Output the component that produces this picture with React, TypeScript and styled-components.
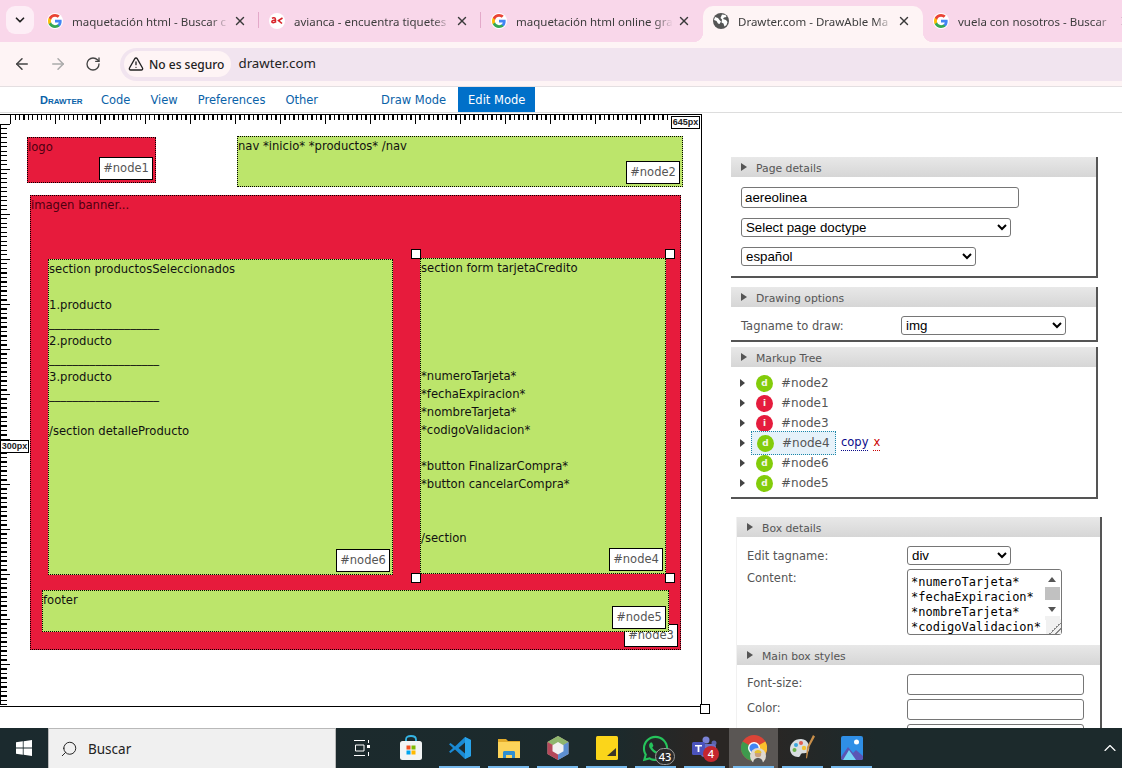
import React from "react";
import styled, { createGlobalStyle, css } from "styled-components";
import { ArrowLeft, ArrowRight, ChevronDown, ChevronUp, RotateCw, Search, TriangleAlert, X } from "lucide-react";
import { FaWhatsapp } from "react-icons/fa";

const GoogleIcon = () => (
    <svg width="16" height="16" viewBox="0 0 48 48">
        <circle cx="24" cy="24" r="24" fill="#fff" />
        <path fill="#4285f4" d="M44 24.5c0-1.500-.1-2.900-.4-4.300H24v8.200h11.300c-.5 2.600-2 4.900-4.300 6.400v5.300h6.900C41.900 36.900 44 31.200 44 24.500z" />
        <path fill="#34a853" d="M24 45c5.700 0 10.500-1.900 13.900-5.100L31 34.600c-1.900 1.300-4.300 2-7 2-5.400 0-10-3.600-11.600-8.500H5.300v5.400C8.800 40.300 15.900 45 24 45z" />
        <path fill="#fbbc05" d="M12.400 28.100c-.4-1.300-.7-2.600-.7-4.100s.3-2.800.7-4.100v-5.400H5.300C3.900 17.300 3 20.600 3 24s.9 6.700 2.300 9.500l7.100-5.400z" />
        <path fill="#ea4335" d="M24 11.400c3.100 0 5.800 1.100 8 3.100l6-6C34.500 5.200 29.700 3 24 3 15.900 3 8.800 7.700 5.300 14.500l7.100 5.400c1.600-4.900 6.200-8.500 11.600-8.500z" />
    </svg>
);

const AviancaIcon = () => (
    <svg width="16" height="16" viewBox="0 0 16 16">
        <circle cx="8" cy="8" r="8" fill="#fff" />
        <path d="M3 5.300c1-.7 3.500-.9 3.500 1.100v3.300M6.500 7.400c-1.500-.3-3.700 0-3.700 1.300 0 1.400 2.500 1.200 3.700-.2" stroke="#d8232a" strokeWidth="1.500" fill="none" />
        <path d="M13.500 5L9.500 7.500l3.500 3" stroke="#d8232a" strokeWidth="1.600" fill="none" />
    </svg>
);

const GlobeIcon = () => (
    <svg width="16" height="16" viewBox="0 0 16 16">
        <circle cx="8" cy="8" r="8" fill="#555" />
        <path d="M2 4l3 1 1.500 2L8 8.500 6.500 11 5 10.500 3.500 8 1 7zM9 1.500l3.500.5 1 2-2.500.5L10 6l3 1 1.500 2-1 3-2 1.500-1-3-2-1 .5-3L7.500 5z" fill="#fff" />
    </svg>
);

const WindowsIcon = () => (
    <svg width="16" height="16" viewBox="0 0 16 16" fill="#fff">
        <path d="M0 2.300l6.800-1v6.300H0zM7.600 1.200L16 0v7.600H7.600zM0 8.400h6.800v6.300l-6.800-1zM7.600 8.400H16V16l-8.400-1.200z" />
    </svg>
);

const TaskViewIcon = () => (
    <svg width="18" height="18" viewBox="0 0 18 18" fill="none" stroke="#fff" strokeWidth="1">
        <path d="M1 1.500h11M1 16.500h11M2.500 6h8.500v6H2.500zM15.500 1v3M15.500 13v4" />
        <rect x="14" y="6" width="3" height="3" fill="#fff" stroke="none" />
    </svg>
);

const StoreIcon = () => (
    <svg width="24" height="26" viewBox="0 0 24 26">
        <path d="M7 7V4.500C7 2 9 1 12 1s5 1 5 3.500V7" fill="none" stroke="#35b5e5" strokeWidth="1.800" />
        <rect x="1" y="6" width="22" height="19" rx="2.500" fill="#f2f4f5" />
        <rect x="7.500" y="10.500" width="4" height="4" fill="#f25022" />
        <rect x="12.500" y="10.500" width="4" height="4" fill="#7fba00" />
        <rect x="7.500" y="15.500" width="4" height="4" fill="#00a4ef" />
        <rect x="12.500" y="15.500" width="4" height="4" fill="#ffb900" />
    </svg>
);

const VsCodeIcon = () => (
    <svg width="24" height="24" viewBox="0 0 24 24">
        <path d="M17 1l6 3v16l-6 3-10-9.500L2.500 17 1 15.800 5 12 1 8.200l1.500-1.200L7 10.500z" fill="#1a8ad4" />
        <path d="M17 6.500L10.500 12l6.500 5.500z" fill="#1c2a2e" />
        <path d="M17 1l6 3v16l-6 3z" fill="#28a3ea" />
    </svg>
);

const FolderIcon = () => (
    <svg width="24" height="22" viewBox="0 0 24 22">
        <path d="M1 2h8l2 2h12v16H1z" fill="#e3ac2a" />
        <rect x="1" y="5" width="22" height="16" fill="#fcd45a" />
        <path d="M6 21v-5.500c0-1 .8-1.500 1.500-1.500h9c.8 0 1.500.5 1.500 1.500V21h-3v-3H9v3z" fill="#2f8fd0" />
    </svg>
);

const CubeIcon = () => (
    <svg width="24" height="26" viewBox="0 0 24 26">
        <path d="M12 1l10.500 6v12L12 25 1.500 19V7z" fill="#c8a7a0" />
        <path d="M12 1l10.500 6L12 13 1.500 7z" fill="#8fb66d" />
        <path d="M1.500 7L12 13v12L1.500 19z" fill="#b5485a" />
        <path d="M22.500 7v12L12 25V13z" fill="#5d8fd0" />
        <path d="M12 7l5.500 3.200v6L12 19.500l-5.500-3.300v-6z" fill="#f1f1f1" />
    </svg>
);

const StickyIcon = () => (
    <svg width="22" height="24" viewBox="0 0 22 24">
        <rect width="22" height="24" rx="1.500" fill="#fbd51a" />
        <path d="M11 20l9-8v8z" fill="#3a3527" />
    </svg>
);

const TeamsIcon = () => (
    <svg width="26" height="24" viewBox="0 0 26 24">
        <circle cx="14" cy="4" r="3.500" fill="#7b83d6" />
        <circle cx="22" cy="7" r="2.500" fill="#5b63ac" />
        <rect x="9" y="8" width="15" height="13" rx="3" fill="#6a71c4" />
        <rect x="0" y="6" width="13" height="13" rx="1.500" fill="#4b53bc" />
        <path d="M3 9h7v1.600H7.400V16H5.600v-5.400H3z" fill="#fff" />
    </svg>
);

const ChromeIcon = () => (
    <svg width="26" height="26" viewBox="0 0 26 26">
        <circle cx="13" cy="13" r="13" fill="#db4437" />
        <path d="M13 13L24.300 6.500A13 13 0 0 1 13 26z" fill="#fbc02d" />
        <path d="M13 13L13 26A13 13 0 0 1 1.700 6.500z" fill="#3e9a4d" />
        <circle cx="13" cy="13" r="6" fill="#fff" />
        <circle cx="13" cy="13" r="4.600" fill="#4285f4" />
    </svg>
);

const AvatarIcon = () => (
    <svg width="16" height="16" viewBox="0 0 16 16">
        <circle cx="8" cy="8" r="8" fill="#ded8d0" />
        <circle cx="8" cy="6" r="3.200" fill="#caa07e" />
        <path d="M4.500 5c0-2 1.500-3 3.500-3s3.500 1 3.500 3z" fill="#e7c22e" />
        <path d="M3 16c0-4 2-6 5-6s5 2 5 6z" fill="#555" />
    </svg>
);

const PaletteIcon = () => (
    <svg width="28" height="28" viewBox="0 0 28 28">
        <path d="M12 5C5 5 1 10 1 15c0 5 4 8 8 8 2.500 0 2-2 3-3 1.500-1.500 5 0 7-2 3-3 1-13-7-13z" fill="#d8dde0" />
        <circle cx="7" cy="11" r="2" fill="#3aa5dc" />
        <circle cx="12" cy="9" r="2" fill="#e35d4f" />
        <circle cx="5.500" cy="16" r="2" fill="#6bb24a" />
        <circle cx="15" cy="14" r="2.200" fill="#f1c232" />
        <path d="M24 1l2 1.500-6 11-2 11-1-.5 1-11z" fill="#c98f4a" />
    </svg>
);

const PhotosIcon = () => (
    <svg width="22" height="24" viewBox="0 0 22 24">
        <rect width="22" height="24" rx="2" fill="#2f8fe6" />
        <path d="M0 21l7-10 5 6 3-3 7 6v2a2 2 0 0 1-2 2H2a2 2 0 0 1-2-2z" fill="#5b55b5" />
        <path d="M2 24l6-10 7 10z" fill="#76d4f5" />
        <circle cx="15.500" cy="6" r="2.500" fill="#fff" />
    </svg>
);

const tabs = [
    { icon: <GoogleIcon />, title: "maquetación html - Buscar c" },
    { icon: <AviancaIcon />, title: "avianca - encuentra tiquetes" },
    { icon: <GoogleIcon />, title: "maquetación html online gra" },
    { icon: <GlobeIcon />, title: "Drawter.com - DrawAble Ma", active: true },
    { icon: <GoogleIcon />, title: "vuela con nosotros - Buscar" },
];

const rule = "_".repeat(19);

const productsText = [
    "section productosSeleccionados",
    "",
    "1.producto",
    rule,
    "2.producto",
    rule,
    "3.producto",
    rule,
    "",
    "/section detalleProducto",
].join("\n");

const formText = [
    "section form tarjetaCredito",
    "",
    "",
    "",
    "",
    "",
    "*numeroTarjeta*",
    "*fechaExpiracion*",
    "*nombreTarjeta*",
    "*codigoValidacion*",
    "",
    "*button FinalizarCompra*",
    "*button cancelarCompra*",
    "",
    "",
    "/section",
].join("\n");

const contentValue = "*numeroTarjeta*\n*fechaExpiracion*\n*nombreTarjeta*\n*codigoValidacion*\n\n*button FinalizarCompra*\n*button cancelarCompra*\n\n\n/section";

const treeRows = [
    { kind: "d", name: "#node2" },
    { kind: "i", name: "#node1" },
    { kind: "i", name: "#node3" },
    { kind: "d", name: "#node4", selected: true },
    { kind: "d", name: "#node6" },
    { kind: "d", name: "#node5" },
];

const handles = [
    { x: 411, y: 136 },
    { x: 665, y: 136 },
    { x: 411, y: 460 },
    { x: 665, y: 460 },
];

export default function App() {
    return (
        <>
            <GlobalStyle />
            <Page>
                <TabStrip>
                    <TabMenu>
                        <ChevronDown size={14} strokeWidth={3} />
                    </TabMenu>
                    {tabs.map((tab, index) => (
                        <Tab key={tab.title} $active={!!tab.active} $divider={index < 2}>
                            <FavIcon>{tab.icon}</FavIcon>
                            <TabTitle>{tab.title}</TabTitle>
                            <X size={14} strokeWidth={2.4} color="#3a3a3a" />
                        </Tab>
                    ))}
                </TabStrip>

                <Toolbar>
                    <ArrowLeft size={18} color="#444" />
                    <ArrowRight size={18} color="#aaa" />
                    <RotateCw size={16} color="#444" />
                    <Omnibox>
                        <SecurityChip>
                            <TriangleAlert size={16} color="#222" />
                            No es seguro
                        </SecurityChip>
                        <Address>drawter.com</Address>
                    </Omnibox>
                </Toolbar>

                <NavBar>
                    <Logo>Drawter</Logo>
                    <NavItem>Code</NavItem>
                    <NavItem>View</NavItem>
                    <NavItem>Preferences</NavItem>
                    <NavItem>Other</NavItem>
                    <ModeItem>Draw Mode</ModeItem>
                    <ModeItem $active>Edit Mode</ModeItem>
                </NavBar>

                <Workspace>
                    <Canvas>
                        <TopRuler />
                        <LeftRuler />
                        <SizeTag $x={671} $y={3}>645px</SizeTag>
                        <SizeTag $x={0} $y={327}>300px</SizeTag>
                        <CornerHandle />

                        <Node $x={27} $y={24} $w={129} $h={46} $red>
                            logo
                            <NodeLabel>#node1</NodeLabel>
                        </Node>
                        <Node $x={237} $y={23} $w={446} $h={51}>
                            nav *inicio* *productos* /nav
                            <NodeLabel>#node2</NodeLabel>
                        </Node>
                        <Node $x={30} $y={82} $w={651} $h={455} $red>
                            imagen banner...
                            <NodeLabel>#node3</NodeLabel>
                        </Node>
                        <Node $x={48} $y={146} $w={345} $h={316}>
                            {productsText}
                            <NodeLabel>#node6</NodeLabel>
                        </Node>
                        <Node $x={420} $y={145} $w={246} $h={316}>
                            {formText}
                            <NodeLabel>#node4</NodeLabel>
                        </Node>
                        <Node $x={42} $y={477} $w={627} $h={42}>
                            footer
                            <NodeLabel>#node5</NodeLabel>
                        </Node>
                        {handles.map(handle => (
                            <Handle key={`${handle.x}-${handle.y}`} $x={handle.x} $y={handle.y} />
                        ))}
                    </Canvas>

                    <Sidebar>
                        <Panel>
                            <PanelHeader>Page details</PanelHeader>
                            <PageFields>
                                <NameInput defaultValue="aereolinea" />
                                <NativeSelect $width={270}>
                                    <option>Select page doctype</option>
                                </NativeSelect>
                                <NativeSelect $width={235}>
                                    <option>español</option>
                                </NativeSelect>
                            </PageFields>
                        </Panel>

                        <Panel $gap={9}>
                            <PanelHeader>Drawing options</PanelHeader>
                            <FieldRow>
                                <FieldLabel>Tagname to draw:</FieldLabel>
                                <NativeSelect $width={165}>
                                    <option>img</option>
                                </NativeSelect>
                            </FieldRow>
                        </Panel>

                        <Panel $gap={5}>
                            <PanelHeader>Markup Tree</PanelHeader>
                            <Tree>
                                {treeRows.map(row => (
                                    <TreeRow key={row.name}>
                                        <Caret />
                                        <TreeEntry $selected={!!row.selected}>
                                            <KindBadge $kind={row.kind}>{row.kind}</KindBadge>
                                            {row.name}
                                        </TreeEntry>
                                        {row.selected && (
                                            <>
                                                <CopyLink>copy</CopyLink>
                                                <RemoveLink>x</RemoveLink>
                                            </>
                                        )}
                                    </TreeRow>
                                ))}
                            </Tree>
                        </Panel>

                        <OpenPanel>
                            <PanelHeader>Box details</PanelHeader>
                            <BoxFields>
                                <FieldRow $compact>
                                    <FieldLabel>Edit tagname:</FieldLabel>
                                    <NativeSelect $width={104}>
                                        <option>div</option>
                                    </NativeSelect>
                                </FieldRow>
                                <ContentRow>
                                    <ContentLabel>Content:</ContentLabel>
                                    <ContentBox>
                                        <ContentArea defaultValue={contentValue} />
                                        <ScrollTrack>
                                            <ScrollThumb />
                                        </ScrollTrack>
                                    </ContentBox>
                                </ContentRow>
                            </BoxFields>
                            <PanelHeader>Main box styles</PanelHeader>
                            <StyleFields>
                                <FieldRow $compact>
                                    <StyleLabel>Font-size:</StyleLabel>
                                    <StyleInput />
                                </FieldRow>
                                <FieldRow $compact>
                                    <StyleLabel>Color:</StyleLabel>
                                    <StyleInput />
                                </FieldRow>
                                <FieldRow $compact>
                                    <StyleLabel />
                                    <StyleInput />
                                </FieldRow>
                            </StyleFields>
                        </OpenPanel>
                    </Sidebar>
                </Workspace>

                <Taskbar>
                    <StartButton>
                        <WindowsIcon />
                    </StartButton>
                    <SearchBox>
                        <FlippedSearch size={18} strokeWidth={1.3} color="#222" />
                        Buscar
                    </SearchBox>
                    <TaskIcons>
                        <TaskIcon><TaskViewIcon /></TaskIcon>
                        <TaskIcon><StoreIcon /></TaskIcon>
                        <TaskIcon $running><VsCodeIcon /></TaskIcon>
                        <TaskIcon $running><FolderIcon /></TaskIcon>
                        <TaskIcon $running><CubeIcon /></TaskIcon>
                        <TaskIcon $running><StickyIcon /></TaskIcon>
                        <TaskIcon $running>
                            <FaWhatsapp size={29} color="#25c35b" />
                            <CountBadge $dark>43</CountBadge>
                        </TaskIcon>
                        <TaskIcon $running>
                            <TeamsIcon />
                            <CountBadge>4</CountBadge>
                        </TaskIcon>
                        <TaskIcon $running $current>
                            <ChromeIcon />
                            <AvatarSlot><AvatarIcon /></AvatarSlot>
                        </TaskIcon>
                        <TaskIcon $running><PaletteIcon /></TaskIcon>
                        <TaskIcon $running><PhotosIcon /></TaskIcon>
                    </TaskIcons>
                    <TrayChevron>
                        <ChevronUp size={20} strokeWidth={1.4} color="#fff" />
                    </TrayChevron>
                </Taskbar>
            </Page>
        </>
    );
}

const GlobalStyle = createGlobalStyle`
    html, body {
        margin: 0;
        padding: 0;
        background: #fff;
    }
    body {
        font-family: "DejaVu Sans", sans-serif;
    }
    * {
        box-sizing: border-box;
    }
`;

const Page = styled.div`
    width: 1122px;
    height: 768px;
    display: flex;
    flex-direction: column;
    overflow: hidden;
`;

const TabStrip = styled.div`
    height: 42px;
    flex: none;
    display: flex;
    align-items: flex-end;
    padding-left: 37px;
    position: relative;
    background: #f9d7ea;
    overflow: hidden;
`;

const TabMenu = styled.div`
    position: absolute;
    left: 6px;
    top: 6px;
    width: 28px;
    height: 28px;
    border-radius: 9px;
    display: flex;
    align-items: center;
    justify-content: center;
    background: #fdeef6;
    color: #222;
`;

const activeTab = css`
    &::before,
    &::after {
        content: "";
        position: absolute;
        bottom: 0;
        width: 10px;
        height: 10px;
    }
    &::before {
        left: -10px;
        background: radial-gradient(circle at 0 0, transparent 10px, #fef4f5 10.5px);
    }
    &::after {
        right: -10px;
        background: radial-gradient(circle at 100% 0, transparent 10px, #fef4f5 10.5px);
    }
`;

const dividedTab = css`
    &::after {
        content: "";
        position: absolute;
        right: 0;
        top: 6px;
        height: 16px;
        width: 1px;
        background: #e3a9c9;
    }
`;

const Tab = styled.div<{ $active: boolean; $divider: boolean }>`
    width: ${p => (p.$active ? "220px" : "222px")};
    height: 36px;
    flex: none;
    display: flex;
    align-items: center;
    padding: 0 12px 6px 10px;
    position: relative;
    border-radius: 10px 10px 0 0;
    background: ${p => (p.$active ? "#fef4f5" : "transparent")};
    ${p => p.$active && activeTab}
    ${p => p.$divider && dividedTab}
`;

const FavIcon = styled.span`
    width: 16px;
    height: 16px;
    flex: none;
    display: flex;
    margin-right: 9px;
`;

const TabTitle = styled.span`
    flex: 1;
    min-width: 0;
    margin-right: 4px;
    font: 11.5px "Noto Sans", sans-serif;
    color: #3c3c3c;
    white-space: nowrap;
    mask-image: linear-gradient(to right, #000 88%, transparent 100%);
`;

const Toolbar = styled.div`
    height: 45px;
    flex: none;
    display: flex;
    align-items: center;
    gap: 18px;
    padding-left: 13px;
    background: #fef4f5;
    border-bottom: 1px solid #e4dfe1;
`;

const Omnibox = styled.div`
    flex: 1;
    height: 33px;
    margin-left: 1px;
    margin-right: -20px;
    display: flex;
    align-items: center;
    padding-left: 4px;
    border-radius: 17px;
    background: #f1e4ef;
`;

const SecurityChip = styled.div`
    height: 26px;
    display: flex;
    align-items: center;
    gap: 5px;
    padding: 0 7px 0 4px;
    border-radius: 13px;
    background: #fef4f5;
    font: 500 12px "Noto Sans", sans-serif;
    color: #222;
`;

const Address = styled.span`
    margin-left: 7px;
    margin-top: -2px;
    font: 13.3px "Noto Sans", sans-serif;
    color: #222;
`;

const NavBar = styled.div`
    height: 26px;
    flex: none;
    display: flex;
    align-items: stretch;
    padding-left: 30px;
    border-bottom: 1px solid #ddd;
    font-size: 11.5px;
    color: #0a62a8;
`;

const Logo = styled.div`
    width: 61px;
    padding-left: 10px;
    display: flex;
    align-items: center;
    font: 700 11px "Liberation Sans", sans-serif;
    font-variant: small-caps;
    color: #0a62a8;
`;

const NavItem = styled.div`
    display: flex;
    align-items: center;
    padding: 0 10px;
`;

const ModeItem = styled(NavItem)<{ $active?: boolean }>`
    background: ${p => (p.$active ? "#0070c9" : "transparent")};
    color: ${p => (p.$active ? "#fff" : "#0a62a8")};
    margin-left: ${p => (p.$active ? "2px" : "43px")};
`;

const Workspace = styled.div`
    flex: 1;
    min-height: 0;
    display: flex;
    overflow: hidden;
`;

const Canvas = styled.div`
    width: 731px;
    flex: none;
    position: relative;
    &::before {
        content: "";
        position: absolute;
        left: 0;
        top: 1px;
        width: 701px;
        height: 591px;
        border: solid #000;
        border-width: 1px 1px 1px 0;
    }
`;

const TopRuler = styled.div`
    position: absolute;
    left: 10px;
    top: 1px;
    width: 658px;
    height: 10px;
    background:
        repeating-linear-gradient(to right, #000 0 1px, transparent 1px 45px) 0 0 / 100% 10px no-repeat,
        repeating-linear-gradient(to right, #000 0 1px, transparent 1px 4.5px) 0 0 / 100% 6px no-repeat;
`;

const LeftRuler = styled.div`
    position: absolute;
    left: 0;
    top: 11px;
    width: 10px;
    height: 581px;
    border-left: 1px solid #000;
    background:
        repeating-linear-gradient(to bottom, #000 0 1px, transparent 1px 45px) 0 0 / 10px 100% no-repeat,
        repeating-linear-gradient(to bottom, #000 0 1px, transparent 1px 4.5px) 0 0 / 6px 100% no-repeat;
`;

const SizeTag = styled.div<{ $x: number; $y: number }>`
    position: absolute;
    left: ${p => p.$x}px;
    top: ${p => p.$y}px;
    width: 29px;
    height: 13px;
    border: 1px solid #000;
    background: #fff;
    font: 700 9px/11px "Liberation Sans", sans-serif;
    text-align: center;
    color: #222;
    z-index: 3;
`;

const CornerHandle = styled.div`
    position: absolute;
    left: 700px;
    top: 591px;
    width: 10px;
    height: 10px;
    border: 1px solid #000;
    background: #fff;
`;

const Node = styled.div<{ $x: number; $y: number; $w: number; $h: number; $red?: boolean }>`
    position: absolute;
    left: ${p => p.$x}px;
    top: ${p => p.$y}px;
    width: ${p => p.$w}px;
    height: ${p => p.$h}px;
    border: 1px dotted #000;
    background: ${p => (p.$red ? "#e71b3c" : "#bce56b")};
    color: ${p => (p.$red ? "#4d0010" : "#111")};
    font-size: 11.6px;
    line-height: 18px;
    white-space: pre-wrap;
`;

const NodeLabel = styled.div`
    position: absolute;
    right: 2px;
    bottom: 2px;
    width: 54px;
    height: 23px;
    border: 1px solid #000;
    background: #fff;
    font-size: 11.5px;
    line-height: 21px;
    text-align: center;
    color: #555;
`;

const Handle = styled.div<{ $x: number; $y: number }>`
    position: absolute;
    left: ${p => p.$x}px;
    top: ${p => p.$y}px;
    width: 10px;
    height: 10px;
    border: 1px solid #000;
    background: #fff;
`;

const Sidebar = styled.div`
    flex: 1;
    min-width: 0;
    display: flex;
    flex-direction: column;
    padding-top: 44px;
`;

const Panel = styled.section<{ $gap?: number }>`
    width: 367px;
    margin-top: ${p => p.$gap ?? 0}px;
    background: #fff;
    border-right: 2px solid #555;
    border-bottom: 2px solid #555;
`;

const OpenPanel = styled.section`
    width: 366px;
    margin: 18px 0 0 5px;
    background: #fff;
    border-right: 2px solid #555;
    border-left: 1px solid #f1f1f1;
`;

const PanelHeader = styled.h3`
    margin: 0;
    height: 20px;
    padding-left: 25px;
    position: relative;
    font-size: 10.8px;
    font-weight: 400;
    line-height: 23px;
    color: #555;
    background: linear-gradient(to bottom, #e8e8e8, #d6d6d6);
    &::before {
        content: "";
        position: absolute;
        left: 10px;
        top: 6px;
        border-left: 6px solid #555;
        border-top: 4px solid transparent;
        border-bottom: 4px solid transparent;
    }
`;

const PageFields = styled.div`
    height: 99px;
    padding: 10px 10px 0;
    display: flex;
    flex-direction: column;
    align-items: flex-start;
    gap: 10px;
`;

const NameInput = styled.input`
    width: 278px;
    height: 21px;
    padding: 0 3px;
    border: 1px solid #767676;
    border-radius: 3px;
    font: 13.3px "Liberation Sans", sans-serif;
    color: #000;
`;

const NativeSelect = styled.select<{ $width: number }>`
    width: ${p => p.$width}px;
    height: 19px;
    flex: none;
    padding: 0;
    border: 1px solid #767676;
    border-radius: 3px;
    background-color: #fff;
    font: 13.3px "Liberation Sans", sans-serif;
    color: #000;
`;

const FieldRow = styled.div<{ $compact?: boolean }>`
    display: flex;
    align-items: center;
    padding: ${p => (p.$compact ? "0" : "9px 10px 5px")};
`;

const FieldLabel = styled.span`
    width: 160px;
    flex: none;
    font-size: 11.5px;
    color: #555;
`;

const ContentLabel = styled(FieldLabel)`
    padding-top: 2px;
`;

const StyleLabel = styled(FieldLabel)`
    margin-bottom: 3px;
`;

const Tree = styled.div`
    height: 130px;
    padding: 6px 0 0 9px;
`;

const TreeRow = styled.div`
    height: 20px;
    display: flex;
    align-items: center;
    font-size: 12px;
    color: #555;
`;

const Caret = styled.span`
    flex: none;
    margin-right: 6px;
    border-left: 5px solid #444;
    border-top: 4.500px solid transparent;
    border-bottom: 4.500px solid transparent;
`;

const TreeEntry = styled.div<{ $selected: boolean }>`
    width: 85px;
    height: ${p => (p.$selected ? "24px" : "20px")};
    flex: none;
    display: flex;
    align-items: center;
    gap: 8px;
    padding-left: ${p => (p.$selected ? "5px" : "4px")};
    border: 1px dotted ${p => (p.$selected ? "#1a86a8" : "transparent")};
    background: ${p => (p.$selected ? "#e6f2fa" : "transparent")};
    position: relative;
    z-index: 1;
`;

const KindBadge = styled.span<{ $kind: string }>`
    width: 17px;
    height: 17px;
    flex: none;
    border-radius: 50%;
    background: ${p => (p.$kind === "d" ? "#83cc0a" : "#e51c3d")};
    color: #f4f8e8;
    font: 700 9px/17px "DejaVu Sans", sans-serif;
    text-align: center;
`;

const CopyLink = styled.span`
    margin-left: 5px;
    color: #0a0a8a;
    font-size: 11.5px;
    line-height: 15px;
    border-bottom: 1px dotted #0a0a8a;
`;

const RemoveLink = styled.span`
    margin-left: 5px;
    color: #c00;
    font-size: 11.5px;
    line-height: 15px;
    border-bottom: 1px dotted #c00;
`;

const BoxFields = styled.div`
    height: 108px;
    padding: 9px 0 0 10px;
`;

const ContentRow = styled.div`
    display: flex;
    align-items: flex-start;
    margin-top: 4px;
`;

const ContentBox = styled.div`
    position: relative;
    width: 155px;
    height: 66px;
    flex: none;
`;

const ContentArea = styled.textarea`
    display: block;
    width: 155px;
    height: 66px;
    margin: 0;
    padding: 5px 3px 0;
    border: 1px solid #767676;
    border-radius: 3px;
    font: 12px/15px "DejaVu Sans Mono", monospace;
    color: #000;
    overflow: hidden;
    resize: both;
    white-space: pre;
    &::-webkit-resizer {
        background: linear-gradient(135deg, #f1f1f1 60%, #888 60% 66%, #f1f1f1 66% 78%, #888 78% 84%, #f1f1f1 84%);
    }
`;

// the sandbox browser hides native scrollbars, so the textarea's bar is drawn over it
const ScrollTrack = styled.div`
    position: absolute;
    right: 2px;
    top: 1px;
    bottom: 15px;
    width: 15px;
    background: linear-gradient(to bottom, #fff 46px, #f1f1f1 46px);
    pointer-events: none;
    &::before,
    &::after {
        content: "";
        position: absolute;
        left: 3px;
        border-left: 4.500px solid transparent;
        border-right: 4.500px solid transparent;
    }
    &::before {
        top: 7px;
        border-bottom: 5px solid #555;
    }
    &::after {
        top: 37px;
        border-top: 5px solid #555;
    }
`;

const ScrollThumb = styled.div`
    position: absolute;
    left: 0;
    right: 0;
    top: 17px;
    height: 13px;
    background: #c1c1c1;
`;

const StyleFields = styled.div`
    padding: 9px 0 0 10px;
    display: flex;
    flex-direction: column;
    gap: 4px;
`;

const StyleInput = styled.input`
    width: 177px;
    height: 21px;
    padding: 0 3px;
    border: 1px solid #767676;
    border-radius: 3px;
    background: #fff;
`;

const Taskbar = styled.div`
    height: 40px;
    flex: none;
    display: flex;
    align-items: stretch;
    position: relative;
    z-index: 5;
    background: linear-gradient(to right, #1b2a2e 0, #1c2a2c 55%, #2a2624 62%, #2a2624 68%, #1c2a2c 78%, #1c2a2c 100%);
`;

const StartButton = styled.div`
    width: 48px;
    flex: none;
    display: flex;
    align-items: center;
    justify-content: center;
`;

const SearchBox = styled.div`
    width: 288px;
    flex: none;
    display: flex;
    align-items: center;
    gap: 10px;
    padding-left: 11px;
    border: 1px solid #b9b9b9;
    border-width: 1px 1px 0;
    background: #f0f0f0;
    font: 13.5px "Noto Sans", sans-serif;
    color: #222;
`;

const FlippedSearch = styled(Search)`
    transform: scaleX(-1);
`;

const TaskIcons = styled.div`
    display: flex;
    margin-left: 1px;
`;

const TaskIcon = styled.div<{ $running?: boolean; $current?: boolean }>`
    width: 49px;
    flex: none;
    display: flex;
    align-items: center;
    justify-content: center;
    position: relative;
    background: ${p => (p.$current ? "#5a5654" : "transparent")};
    &::after {
        content: "";
        display: ${p => (p.$running ? "block" : "none")};
        position: absolute;
        left: 4px;
        right: 4px;
        bottom: 0;
        height: 2px;
        background: #76b9ed;
    }
`;

const CountBadge = styled.span<{ $dark?: boolean }>`
    position: absolute;
    left: ${p => (p.$dark ? "24px" : "23px")};
    top: ${p => (p.$dark ? "20px" : "18px")};
    min-width: ${p => (p.$dark ? "20px" : "16px")};
    height: ${p => (p.$dark ? "17px" : "16px")};
    padding: 0 1px;
    border-radius: 9px;
    background: ${p => (p.$dark ? "#2b2b2b" : "#c4262e")};
    border: ${p => (p.$dark ? "1px solid #999" : "none")};
    color: #fff;
    font: 500 11px/15px "Noto Sans", sans-serif;
    text-align: center;
`;

const AvatarSlot = styled.span`
    position: absolute;
    left: 21px;
    top: 20px;
    display: flex;
`;

const TrayChevron = styled.div`
    margin-left: auto;
    width: 24px;
    display: flex;
    align-items: center;
    justify-content: center;
`;
